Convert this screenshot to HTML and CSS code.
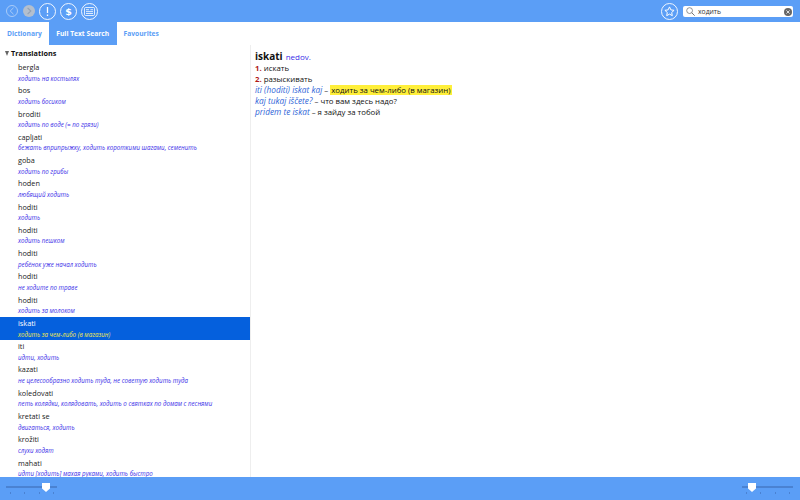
FILE: index.html
```html
<!DOCTYPE html>
<html lang="en">
<head>
    <meta charset="UTF-8">
    <title>Dictionary</title>
    <link rel="stylesheet" href="styles.css">
</head>
<body>
    <header class="toolbar">
        <button class="nav-button small"><svg width="12" height="12" viewBox="0 0 12 12"><circle cx="6" cy="6" r="5.5" fill="none" stroke="#a9cbf8"/><path d="M7.5 2.8L4.2 6l3.3 3.2" fill="none" stroke="#a9cbf8"/></svg></button>
        <button class="nav-button small"><svg width="12" height="12" viewBox="0 0 12 12"><circle cx="6" cy="6" r="6" fill="#b4bfcd"/><path d="M4.6 2.8L7.8 6 4.6 9.2" fill="none" stroke="#93a2b5" stroke-width="1.2"/></svg></button>
        <button class="nav-button"><svg width="17" height="17" viewBox="0 0 17 17"><circle cx="8.5" cy="8.5" r="8" fill="none" stroke="#fff" stroke-width="0.9"/><path d="M8.5 4v6M8.5 11.5V13" stroke="#fff" stroke-width="1.3"/></svg></button>
        <button class="nav-button"><svg width="17" height="17" viewBox="0 0 17 17"><circle cx="8.5" cy="8.5" r="8" fill="none" stroke="#fff" stroke-width="0.9"/><text x="8.5" y="12" text-anchor="middle" class="dollar">$</text></svg></button>
        <button class="nav-button"><svg width="17" height="17" viewBox="0 0 17 17"><circle cx="8.5" cy="8.5" r="8" fill="none" stroke="#fff" stroke-width="0.9"/><rect x="3.5" y="4.5" width="10" height="8" rx="1" fill="none" stroke="#fff" stroke-width="0.8"/><path d="M5 6.7h3M9.5 6.7h2.5M5 8.6h7M5 10.5h7" stroke="#fff" stroke-width="0.8"/></svg></button>
        <button class="nav-button star-button"><svg width="17" height="17" viewBox="0 0 17 17"><circle cx="8.5" cy="8.5" r="8" fill="none" stroke="#fff" stroke-width="0.9"/><path d="M8.5 3.9l1.4 3 3.2.4-2.4 2.2.6 3.2-2.8-1.6-2.8 1.6.6-3.2-2.4-2.2 3.2-.4z" fill="none" stroke="#fff" stroke-width="1" stroke-linejoin="round"/></svg></button>
        <div class="search-box">
            <svg width="9" height="9" viewBox="0 0 9 9"><circle cx="3.6" cy="3.6" r="2.9" fill="none" stroke="#777" stroke-width="0.8"/><path d="M5.7 5.7L8.7 8.7" stroke="#777"/></svg>
            <span class="search-text">ходить</span>
            <svg class="search-clear" width="8" height="8" viewBox="0 0 8 8"><circle cx="4" cy="4" r="4" fill="#666"/><path d="M2.4 2.4l3.2 3.2M5.6 2.4L2.4 5.6" stroke="#ddd"/></svg>
        </div>
    </header>

    <nav class="tabs">
        <a class="tab">Dictionary</a>
        <a class="tab active">Full Text Search</a>
        <a class="tab">Favourites</a>
    </nav>

    <div class="content">
        <aside class="results">
            <div class="group-title"><span class="triangle"></span>Translations</div>
            <ul id="result-list" class="result-list"></ul>
        </aside>
        <main class="article">
            <h2><span class="headword">iskati</span> <span class="pos">nedov.</span></h2>
            <p><b class="num">1.</b> искать</p>
            <p><b class="num">2.</b> разыскивать</p>
            <p class="example"><i class="src">iti (hoditi) iskat kaj</i> <span class="dash">–</span> <mark>ходить за чем-либо (в магазин)</mark></p>
            <p class="example"><i class="src">kaj tukaj iščete?</i> <span class="dash">–</span> что вам здесь надо?</p>
            <p class="example"><i class="src">pridem te iskat</i> <span class="dash">–</span> я зайду за тобой</p>
        </main>
    </div>

    <footer class="bottom-bar">
        <div class="slider slider-left"><span class="thumb"></span><span class="ticks"><i></i><i></i><i></i><i></i></span></div>
        <div class="slider slider-right"><span class="thumb"></span><span class="ticks"><i></i><i></i><i></i><i></i></span></div>
    </footer>

    <script>
        const results = [
            ['bergla', 'ходить на костылях'],
            ['bos', 'ходить босиком'],
            ['broditi', 'ходить по воде (= по грязи)'],
            ['capljati', 'бежать вприпрыжку, ходить короткими шагами, семенить'],
            ['goba', 'ходить по грибы'],
            ['hoden', 'любящий ходить'],
            ['hoditi', 'ходить'],
            ['hoditi', 'ходить пешком'],
            ['hoditi', 'ребёнок уже начал ходить'],
            ['hoditi', 'не ходите по траве'],
            ['hoditi', 'ходить за молоком'],
            ['iskati', 'ходить за чем-либо (в магазин)'],
            ['iti', 'идти, ходить'],
            ['kazati', 'не целесообразно ходить туда, не советую ходить туда'],
            ['koledovati', 'петь колядки, колядовать, ходить о святках по домам с песнями'],
            ['kretati se', 'двигаться, ходить'],
            ['krožiti', 'слухи ходят'],
            ['mahati', 'идти [ходить] махая руками, ходить быстро']
        ];

        const list = document.getElementById('result-list');
        results.forEach(r => {
            const li = document.createElement('li');
            li.className = r[0] === 'iskati' ? 'result selected' : 'result';
            li.innerHTML = `<div class="word">${r[0]}</div><div class="gloss">${r[1]}</div>`;
            list.appendChild(li);
        });
    </script>
</body>
</html>
```

FILE: styles.css
```css
body {
    margin: 0;
    height: 500px;
    overflow: hidden;
    display: flex;
    flex-direction: column;
    font-family: "Open Sans", sans-serif;
    background-color: #fff;
    color: #111;
}

.toolbar {
    height: 22px;
    flex: none;
    display: flex;
    align-items: center;
    padding: 0 7px 0 5.5px;
    background-color: #5b9ef6;
}

.nav-button {
    width: 17px;
    height: 17px;
    margin-right: 4px;
    padding: 0;
    border: none;
    background: none;
    flex: none;
}

.nav-button.small {
    width: 12px;
    height: 12px;
    margin-right: 5.5px;
}

.nav-button.small + .nav-button:not(.small) {
    margin-left: -1.5px;
}

.nav-button svg {
    display: block;
}

.dollar {
    font-family: "DejaVu Sans", sans-serif;
    font-size: 9.5px;
    font-weight: bold;
    fill: #fff;
}

.star-button {
    margin-left: auto;
    margin-right: 0;
}

.search-box {
    width: 110px;
    height: 11px;
    margin: 1px 0 0 5px;
    display: flex;
    align-items: center;
    gap: 3px;
    padding: 0 1px 0 3px;
    box-sizing: border-box;
    border-radius: 2px;
    background-color: #fff;
    font-size: 6.8px;
    color: #333;
}

.search-clear {
    margin-left: auto;
}

.tabs {
    height: 23px;
    flex: none;
    display: flex;
    background-color: #fff;
    font-size: 6.7px;
    font-weight: bold;
    color: #5b9ef6;
}

.tab {
    display: flex;
    align-items: center;
    padding: 0 7px;
}

.tab.active {
    padding: 0 7.5px;
    background-color: #5b9ef6;
    color: #fff;
}

.content {
    flex: 1;
    min-height: 0;
    display: flex;
}

.results {
    width: 250px;
    flex: none;
    overflow: hidden;
    border-right: 1px solid #eee;
}

.group-title {
    display: flex;
    align-items: center;
    height: 16px;
    padding-left: 5px;
    font-size: 7.3px;
    font-weight: bold;
}

.triangle {
    width: 0;
    height: 0;
    margin-right: 2px;
    border-left: 2.5px solid transparent;
    border-right: 2.5px solid transparent;
    border-top: 5px solid #666;
}

.result-list {
    list-style: none;
    margin: 0;
    padding: 0;
}

.result {
    height: 23.27px;
    padding-left: 18px;
}

.word {
    height: 11.6px;
    line-height: 13px;
    font-size: 7.3px;
    color: #222;
}

.gloss {
    height: 11.6px;
    line-height: 12px;
    font-size: 6.2px;
    font-style: italic;
    color: #3a2ee8;
    white-space: nowrap;
}

.result.selected {
    background-color: #0560dd;
}

.result.selected .word {
    color: #fff;
}

.result.selected .gloss {
    color: #f2e84a;
}

.article {
    flex: 1;
    padding: 4px;
    font-size: 7.8px;
}

.article h2 {
    margin: 0;
    line-height: 12px;
    font-weight: normal;
}

.headword {
    font-size: 10px;
    font-weight: bold;
}

.pos {
    font-size: 8px;
    color: #3a2ee8;
}

.article p {
    margin: 0;
    height: 11.1px;
    line-height: 11.1px;
}

.article p.example {
    line-height: 9.6px;
}

.num {
    color: #b01818;
}

.src {
    font-size: 8.3px;
    color: #2f66d8;
}

.dash {
    color: #333;
}

mark {
    padding: 0 1px;
    background-color: #ffef3a;
    color: #111;
}

.bottom-bar {
    height: 23px;
    flex: none;
    display: flex;
    justify-content: space-between;
    padding: 0 7px 0 6px;
    background-color: #5b9ef6;
}

.slider {
    position: relative;
    width: 51px;
    height: 100%;
}

.slider::before {
    content: '';
    position: absolute;
    top: 9px;
    left: 0;
    right: 0;
    height: 2px;
    background-color: #4a82d2;
}

.thumb {
    position: absolute;
    top: 6px;
    width: 8px;
    height: 9px;
    background-color: #fff;
    clip-path: polygon(0 0, 100% 0, 100% 60%, 50% 100%, 0 60%);
}

.slider-left .thumb {
    left: 36px;
}

.slider-right .thumb {
    left: 6px;
}

.ticks {
    position: absolute;
    top: 15px;
    left: 3.5px;
    right: 3px;
    display: flex;
    justify-content: space-between;
}

.ticks i {
    width: 1px;
    height: 2px;
    background-color: #4a82d2;
}
```
